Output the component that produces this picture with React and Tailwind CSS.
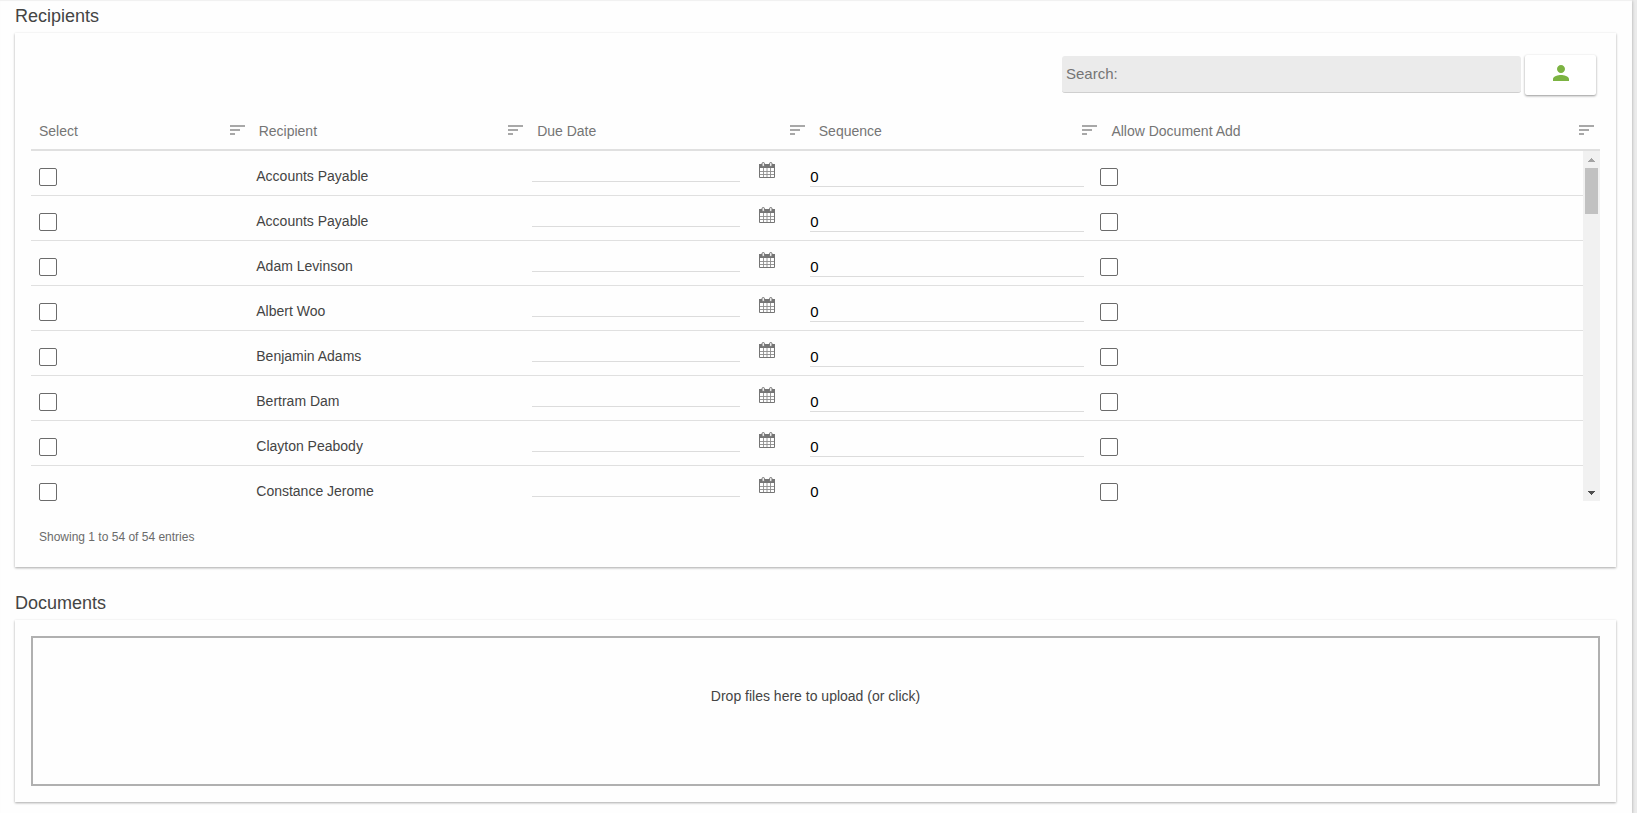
import React from 'react';

const FONT = "font-['Liberation_Sans',Arial,sans-serif]";
const CARD = 'bg-[#fefefe] shadow-[0_1px_3px_rgba(0,0,0,0.12),0_1px_2px_rgba(0,0,0,0.24)]';

const columns = ['Select', 'Recipient', 'Due Date', 'Sequence', 'Allow Document Add'];

const recipients = [
    { id: 1, name: 'Accounts Payable' },
    { id: 2, name: 'Accounts Payable' },
    { id: 3, name: 'Adam Levinson' },
    { id: 4, name: 'Albert Woo' },
    { id: 5, name: 'Benjamin Adams' },
    { id: 6, name: 'Bertram Dam' },
    { id: 7, name: 'Clayton Peabody' },
    { id: 8, name: 'Constance Jerome' },
];

const SortIcon = () => (
    <svg className="h-[10px] w-[15px]" viewBox="0 0 15 10" fill="#a8a8a8" shapeRendering="crispEdges">
        <path d="M0 0h15v2H0zM0 4h10v2H0zM0 8h5v2H0z" />
    </svg>
);

const PersonIcon = () => (
    <svg className="h-6 w-6" viewBox="0 0 24 24" fill="#7cb342">
        <path d="M12 12c2.21 0 4-1.79 4-4s-1.79-4-4-4-4 1.79-4 4 1.79 4 4 4zm0 2c-2.67 0-8 1.34-8 4v2h16v-2c0-2.66-5.33-4-8-4z" />
    </svg>
);

const CalendarIcon = () => (
    <svg className="h-4 w-4" viewBox="0 0 16 16" fill="none">
        <path d="M.5 3.5h15v12H.5z" stroke="#757575" />
        <path d="M0 2h16v4H0z" fill="#757575" />
        <path d="M4.5 6v9M8 6v9M11.5 6v9M1 9.5h14M1 12.5h14" stroke="#8c8c8c" strokeWidth="0.9" />
        <rect x="3" y="0.5" width="2.5" height="4" rx="1.2" fill="#eee" stroke="#757575" />
        <rect x="10.5" y="0.5" width="2.5" height="4" rx="1.2" fill="#eee" stroke="#757575" />
    </svg>
);

// Header and body are separate tables, so both share the same widths
const Cols = () => (
    <colgroup>
        <col className="w-[14%]" />
        <col className="w-[17.75%]" />
        <col className="w-[17.95%]" />
        <col className="w-[18.65%]" />
        <col className="w-[31.65%]" />
    </colgroup>
);

const Checkbox = ({ label }) => (
    <input
        type="checkbox"
        aria-label={label}
        className="block h-[18px] w-[18px] appearance-none rounded-[2px] border border-[#6b6b6b] bg-white checked:bg-[#7cb342]"
    />
);

const RecipientRow = ({ recipient }) => (
    <tr className="h-[45px] align-top *:border-b *:border-[#e0e0e0]">
        <td className="px-2 pt-[17px]">
            <Checkbox label={`Select ${recipient.name}`} />
        </td>
        <td className="px-2 pt-[15px] text-[14px] leading-5 text-[#444]">{recipient.name}</td>
        <td className="px-2">
            <div className="flex items-start">
                <input
                    type="text"
                    aria-label={`Due date for ${recipient.name}`}
                    className="mr-[19px] h-[31px] min-w-0 flex-1 border-b border-[#dcdcdc] bg-transparent pt-2 text-[15px] outline-none"
                />
                <button type="button" aria-label="Pick a date" className="mr-[19px] pt-[11px]">
                    <CalendarIcon />
                </button>
            </div>
        </td>
        <td className="px-2">
            <input
                type="text"
                defaultValue="0"
                aria-label={`Sequence for ${recipient.name}`}
                className="block h-9 w-full border-b border-[#dcdcdc] bg-transparent pt-4 text-[15px] text-black outline-none"
            />
        </td>
        <td className="px-2 pt-[17px]">
            <Checkbox label={`Allow document add for ${recipient.name}`} />
        </td>
    </tr>
);

const ScrollBar = ({ onStep }) => (
    <div className="flex w-[17px] shrink-0 flex-col bg-[#f1f1f1]">
        <button type="button" aria-label="Scroll up" onClick={() => onStep(-45)} className="flex h-[17px] items-center justify-center">
            <svg className="h-1 w-[7px]" viewBox="0 0 7 4" fill="#a3a3a3" shapeRendering="crispEdges">
                <path d="M3 0h1v1h1v1h1v1h1v1H0V3h1V2h1V1h1z" />
            </svg>
        </button>
        <div className="flex-1 px-[2px]">
            <div className="h-[46px] bg-[#c1c1c1]" />
        </div>
        <button type="button" aria-label="Scroll down" onClick={() => onStep(45)} className="flex h-[17px] items-center justify-center">
            <svg className="h-1 w-[7px]" viewBox="0 0 7 4" fill="#505050" shapeRendering="crispEdges">
                <path d="M0 0h7v1H6v1H5v1H4v1H3V3H2V2H1V1H0z" />
            </svg>
        </button>
    </div>
);

const RecipientsCard = () => {
    const listRef = React.useRef(null);

    return (
        <div className={`${CARD} px-4 pt-[22px] pb-5`}>
            {/* Search and add recipient */}
            <div className="flex justify-end gap-1 pr-1">
                <input
                    type="search"
                    placeholder="Search:"
                    aria-label="Search recipients"
                    className="mt-[1px] h-[37px] w-[459px] rounded-[3px] border-b border-[#cfcfcf] bg-[#ebebeb] px-1 pb-[2px] text-[15px] text-[#444] outline-none placeholder:text-[#757575]"
                />
                <button
                    type="button"
                    aria-label="Add recipient"
                    className="flex h-10 w-[71px] justify-center rounded-[2px] bg-white pt-[6px] shadow-[0_1px_3px_rgba(0,0,0,0.2),0_1px_2px_rgba(0,0,0,0.24)]"
                >
                    <PersonIcon />
                </button>
            </div>

            <table className="mt-4 w-full table-fixed border-separate border-spacing-0">
                <Cols />
                <thead>
                    <tr>
                        {columns.map(title => (
                            <th key={title} className="h-10 border-b-2 border-[#e0e0e0] pt-[2px] pr-[6px] pl-2 text-left text-[14px] leading-5 font-normal text-[#757575]">
                                <span className="flex items-start justify-between">
                                    {title}
                                    <span className="pt-1">
                                        <SortIcon />
                                    </span>
                                </span>
                            </th>
                        ))}
                    </tr>
                </thead>
            </table>

            <div className="flex h-[350px]">
                <div ref={listRef} className="flex-1 overflow-y-auto [scrollbar-width:none]">
                    <table className="w-full table-fixed border-separate border-spacing-0">
                        <Cols />
                        <tbody>
                            {recipients.map(recipient => (
                                <RecipientRow key={recipient.id} recipient={recipient} />
                            ))}
                        </tbody>
                    </table>
                </div>
                <ScrollBar onStep={top => listRef.current.scrollBy({ top })} />
            </div>

            <p className="mt-[26px] px-2 text-[12px] leading-5 text-[#6b6b6b]">Showing 1 to 54 of 54 entries</p>
        </div>
    );
};

const DocumentsCard = () => (
    <div className={`${CARD} p-4`}>
        <button
            type="button"
            className="flex h-[150px] w-full items-start justify-center border-2 border-[#b0b0b0] pt-12 text-[14px] leading-5 text-[#444]"
        >
            Drop files here to upload (or click)
        </button>
    </div>
);

const App = () => {
    return (
        <div className={`bg-[#ebebeb] pr-[5px] ${FONT}`}>
            <main className="min-h-screen bg-[#fefefe] pr-4 pl-[15px] shadow-[0_1px_3px_rgba(0,0,0,0.3),inset_0_1px_1px_rgba(0,0,0,0.06)]">
                <section className="pt-1">
                    <h2 className="pb-[5px] text-[18px] leading-6 text-[#444]">Recipients</h2>
                    <RecipientsCard />
                </section>
                <section className="pt-6">
                    <h2 className="pb-[5px] text-[18px] leading-6 text-[#444]">Documents</h2>
                    <DocumentsCard />
                </section>
            </main>
        </div>
    );
};

export default App;
